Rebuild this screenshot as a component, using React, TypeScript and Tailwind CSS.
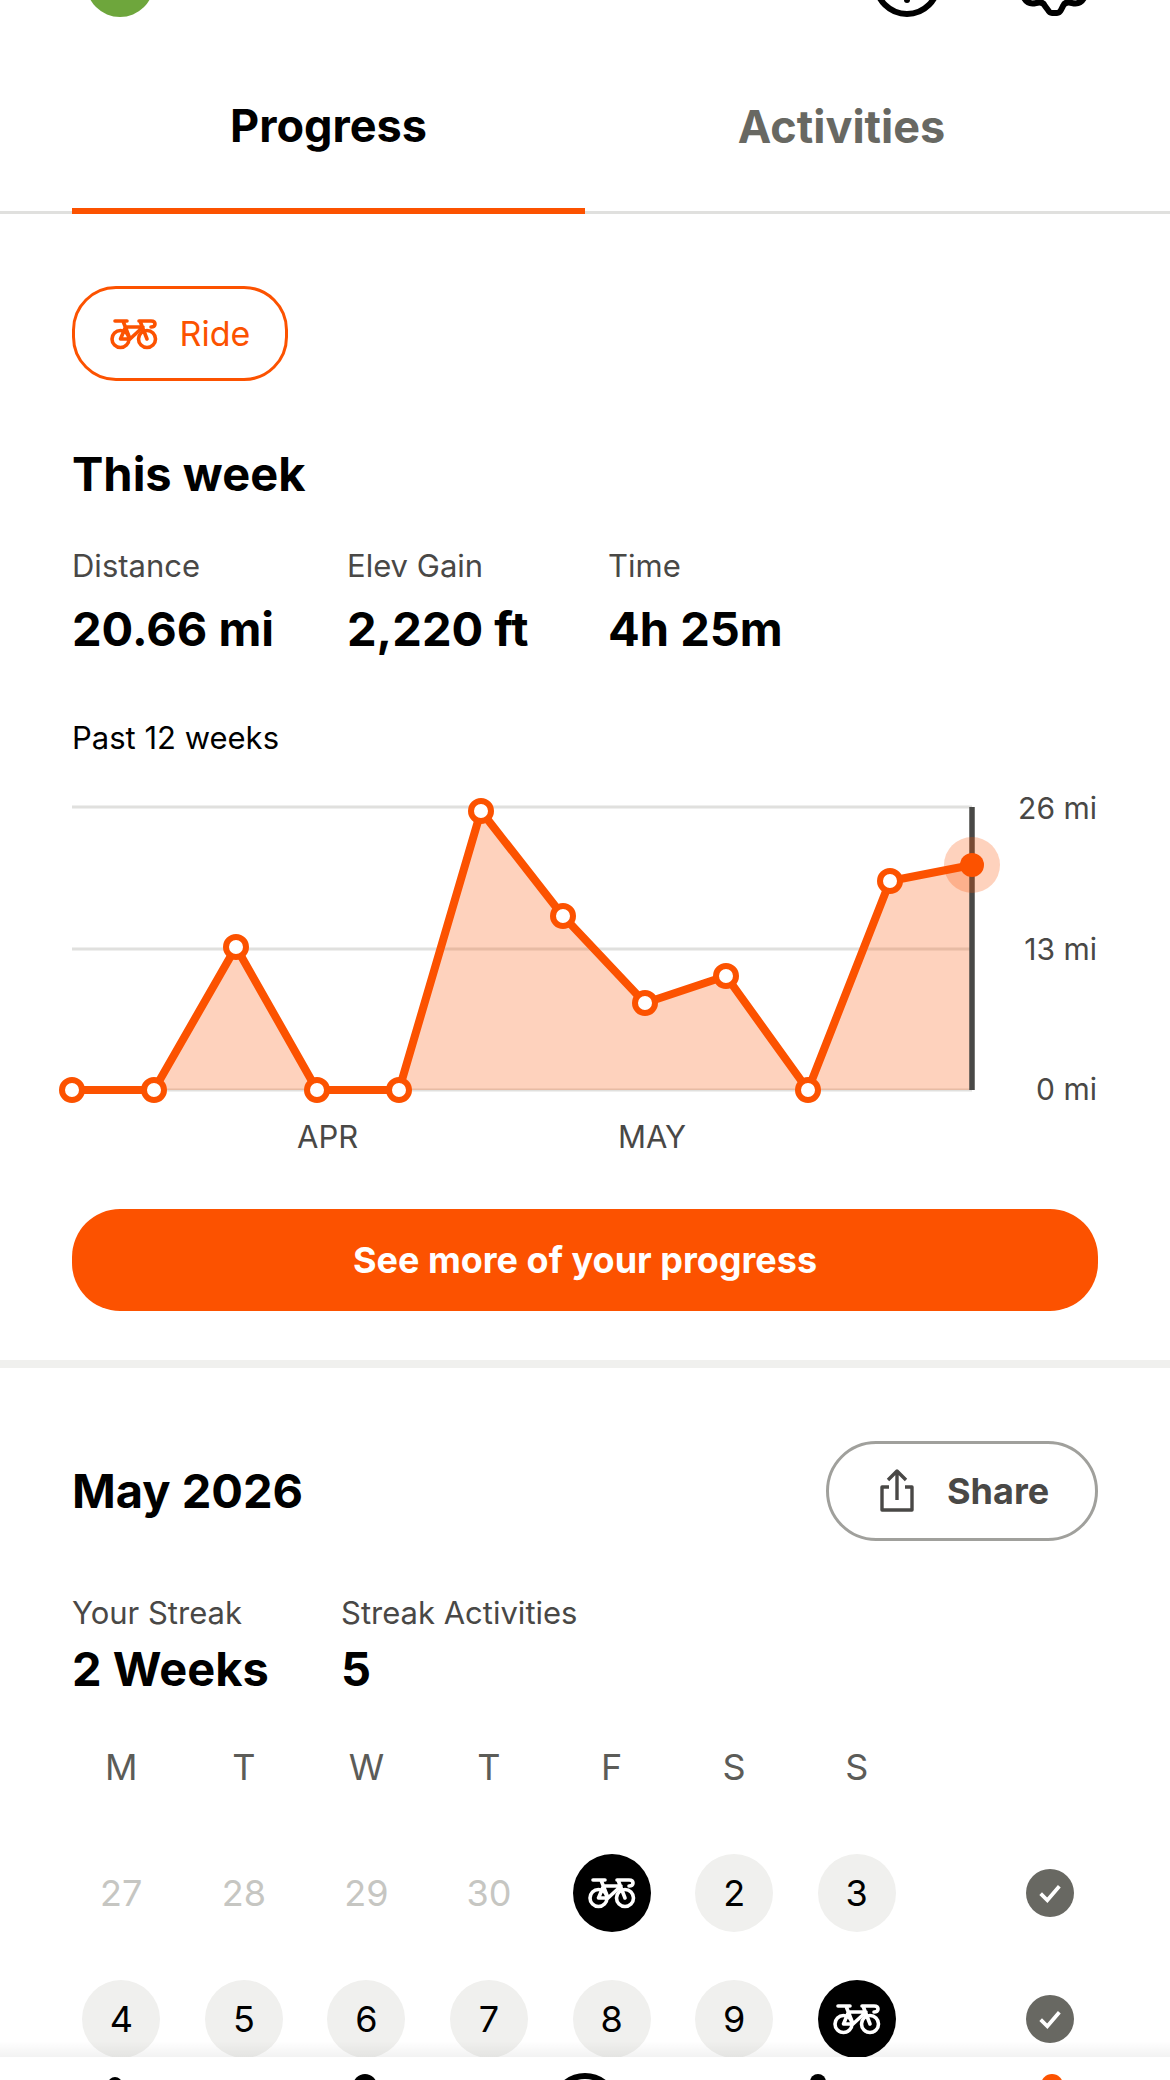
const sans = "font-['Inter','Liberation_Sans',sans-serif]";

const points = [
  [72, 1091], [154, 1091], [236, 948], [317, 1091], [399, 1091], [481, 812],
  [563, 917], [645, 1004], [726, 977], [808, 1091], [890, 882], [972, 866],
];

function Bike({ className }: { className?: string }) {
  return (
    <svg viewBox="0 0 48 32" fill="none" stroke="currentColor" strokeWidth="3.6" strokeLinejoin="round" strokeLinecap="round" className={className}>
      <circle cx="10.5" cy="21" r="8.5" />
      <circle cx="37" cy="21" r="8.5" />
      <path d="M5 3H17M13 3 20 21H10.5L15.5 9H33L20 21M30 3 37 21M29 3H41Q45 3 45 6Q45 9 41 9" />
    </svg>
  );
}

function Chart() {
  const line = points.map(([x, y]) => `${x - 60},${y - 800}`).join(" ");
  return (
    <div className="flex mt-[42px] h-[335px] relative">
      <svg viewBox="0 0 960 335" className="w-[960px] h-[335px] ml-[-12px] shrink-0 overflow-visible">
        <path d="M12 8H912M12 150H912M12 291H912" stroke="#e0e0de" strokeWidth="3" />
        <path d="M94,291 L176,148 L257,291 L339,291 L421,12 L503,117 L585,204 L666,177 L748,291 L830,82 L912,66 L912,291 Z" fill="#fc5200" fillOpacity="0.26" />
        <path d="M912 8V291" stroke="#494846" strokeWidth="5.5" />
        <polyline points={line} fill="none" stroke="#fc5200" strokeWidth="8" strokeLinejoin="round" />
        {points.slice(0, 11).map(([x, y]) => (
          <circle key={x} cx={x - 60} cy={y - 800} r="10" fill="#fff" stroke="#fc5200" strokeWidth="6" />
        ))}
        <circle cx="912" cy="66" r="28" fill="#fc5200" fillOpacity="0.26" />
        <circle cx="912" cy="66" r="12" fill="#fc5200" />
      </svg>
      <div className="absolute right-[1px] top-0 text-[30px] text-[#494846]">
        <div className="absolute right-0 top-[-13px] whitespace-nowrap">26 mi</div>
        <div className="absolute right-0 top-[128px] whitespace-nowrap">13 mi</div>
        <div className="absolute right-0 top-[268px] whitespace-nowrap">0 mi</div>
      </div>
      <div className="absolute left-[225px] top-[315px] text-[31px] text-[#494846]">APR</div>
      <div className="absolute left-[546px] top-[315px] text-[31px] text-[#494846]">MAY</div>
    </div>
  );
}

function Stat({ label, value, width }: { label: string; value: string; width: string }) {
  return (
    <div className={width}>
      <div className="text-[31px] leading-[38px] text-[#494846]">{label}</div>
      <div className="text-[47px] leading-[58px] font-bold text-black mt-[15px]">{value}</div>
    </div>
  );
}

function Day({ n, kind }: { n?: number; kind: "faded" | "plain" | "ride" }) {
  if (kind === "ride") {
    return (
      <div className="w-[78px] h-[78px] rounded-full bg-black text-white flex items-center justify-center">
        <Bike className="w-[48px] h-[32px]" />
      </div>
    );
  }
  return (
    <div className={`w-[78px] h-[78px] rounded-full flex items-center justify-center text-[36px] ${kind === "plain" ? "bg-[#f0f0ee] text-black" : "text-[#c6c6c2]"}`}>
      {n}
    </div>
  );
}

function Week({ days }: { days: { n?: number; kind: "faded" | "plain" | "ride" }[] }) {
  return (
    <div className="flex items-center h-[78px] shrink-0">
      <div className="grid grid-cols-7 w-[858px] ml-[-12px] justify-items-center">
        {days.map((d, i) => (
          <Day key={i} n={d.n} kind={d.kind} />
        ))}
      </div>
      <div className="ml-[108px] w-[48px] h-[48px] rounded-full bg-[#686862] flex items-center justify-center">
        <svg viewBox="0 0 24 24" className="w-[32px] h-[32px]" fill="none" stroke="#fff" strokeWidth="2.8">
          <path d="M5 12.5 10 17.5 19 7" />
        </svg>
      </div>
    </div>
  );
}

export default function App() {
  return (
    <div className={`w-[1170px] h-[2080px] bg-white flex flex-col overflow-hidden ${sans}`}>
      <main className="flex-1 min-h-0 overflow-hidden relative">
        <div className="h-[17px] overflow-hidden flex items-end pl-[86px] pr-[80px]">
          <div className="w-[68px] h-[68px] rounded-full bg-[#6ea63c] shrink-0" />
          <div className="ml-auto w-[68px] h-[68px] rounded-full border-[6px] border-black shrink-0 relative">
            <div className="absolute left-[25px] bottom-[8px] w-[6px] h-[6px] rounded-full bg-black" />
          </div>
          <svg viewBox="0 0 75 22" className="ml-[74px] w-[75px] h-[22px] shrink-0" fill="none" stroke="#000" strokeWidth="6" strokeLinecap="round">
            <path d="M9 3Q13 10 21 8Q28 6 30 11L33 15Q34.5 18 37 18H42Q44.5 18 46 15L48 11Q50 6 57 8Q65 10 69 3" />
          </svg>
        </div>

        <div className="flex h-[197px] px-[72px] border-b-[3px] border-[#e0e0de]">
          <div className="w-[513px] pt-[26px] flex items-center justify-center text-[45px] font-bold text-black border-b-[6px] border-[#fc5200] mb-[-3px]">
            Progress
          </div>
          <div className="flex-1 pt-[26px] flex items-center justify-center text-[45px] font-bold text-[#686862]">
            Activities
          </div>
        </div>

        <div className="px-[72px]">
          <div className="mt-[72px] w-[216px] h-[95px] rounded-[44px] border-[3px] border-[#fc5200] text-[#fc5200] flex items-center justify-center gap-[22px]">
            <Bike className="w-[48px] h-[32px]" />
            <span className="text-[34px]">Ride</span>
          </div>

          <h2 className="mt-[64px] text-[47px] leading-[58px] font-bold text-black">This week</h2>

          <div className="flex mt-[44px]">
            <Stat label="Distance" value="20.66 mi" width="w-[275px]" />
            <Stat label="Elev Gain" value="2,220 ft" width="w-[261px]" />
            <Stat label="Time" value="4h 25m" width="w-[250px]" />
          </div>

          <div className="mt-[61px] text-[31px] leading-[38px] text-black">Past 12 weeks</div>
          <Chart />

          <div className="mt-[75px] h-[102px] rounded-[48px] bg-[#fc5200] text-white text-[36px] font-bold flex items-center justify-center">
            See more of your progress
          </div>
        </div>

        <div className="mt-[49px] h-[8px] bg-[#f0f0ee]" />

        <div className="px-[72px]">
          <div className="mt-[73px] flex items-center justify-between">
            <h2 className="text-[47px] leading-[58px] font-bold text-black">May 2026</h2>
            <div className="w-[272px] h-[100px] rounded-[50px] border-[3px] border-[#a0a09c] text-[#494846] flex items-center pl-[50px] gap-[32px]">
              <svg viewBox="0 0 36 44" className="w-[36px] h-[44px]" fill="none" stroke="currentColor" strokeWidth="3.4" strokeLinejoin="round">
                <path d="M10 18H3v23h30V18h-7M18 31V3M9 11l9-9 9 9" />
              </svg>
              <span className="text-[36px] font-bold">Share</span>
            </div>
          </div>

          <div className="flex mt-[53px]">
            <div className="w-[269px]">
              <div className="text-[31px] leading-[38px] text-[#494846]">Your Streak</div>
              <div className="text-[47px] leading-[58px] font-bold text-black mt-[8px]">2 Weeks</div>
            </div>
            <div>
              <div className="text-[31px] leading-[38px] text-[#494846]">Streak Activities</div>
              <div className="text-[47px] leading-[58px] font-bold text-black mt-[8px]">5</div>
            </div>
          </div>

          <div className="grid grid-cols-7 w-[858px] ml-[-12px] mt-[47px] justify-items-center text-[36px] leading-[44px] text-[#5c5c58]">
            {["M", "T", "W", "T", "F", "S", "S"].map((d, i) => (
              <div key={i}>{d}</div>
            ))}
          </div>

          <div className="mt-[65px] flex flex-col gap-[48px]">
            <Week
              days={[
                { n: 27, kind: "faded" },
                { n: 28, kind: "faded" },
                { n: 29, kind: "faded" },
                { n: 30, kind: "faded" },
                { kind: "ride" },
                { n: 2, kind: "plain" },
                { n: 3, kind: "plain" },
              ]}
            />
            <Week
              days={[
                { n: 4, kind: "plain" },
                { n: 5, kind: "plain" },
                { n: 6, kind: "plain" },
                { n: 7, kind: "plain" },
                { n: 8, kind: "plain" },
                { n: 9, kind: "plain" },
                { kind: "ride" },
              ]}
            />
          </div>
        </div>
        <div className="absolute left-0 right-0 bottom-0 h-[16px] bg-gradient-to-t from-black/5 to-transparent" />
      </main>

      <nav className="h-[23px] shrink-0 overflow-hidden bg-white flex items-start">
        <div className="ml-[108px] mt-[20px] w-[14px] h-[14px] rounded-full bg-black shrink-0" />
        <div className="ml-[231px] mt-[17px] w-[24px] h-[24px] rounded-full bg-black shrink-0" />
        <div className="ml-[174px] mt-[16px] w-[68px] h-[68px] rounded-full border-[6px] border-black shrink-0" />
        <div className="ml-[191px] mt-[17px] w-[16px] h-[22px] rounded-full bg-black shrink-0" />
        <div className="ml-[215px] mt-[17px] w-[22px] h-[22px] rounded-full bg-[#fc5200] shrink-0" />
      </nav>
    </div>
  );
}
